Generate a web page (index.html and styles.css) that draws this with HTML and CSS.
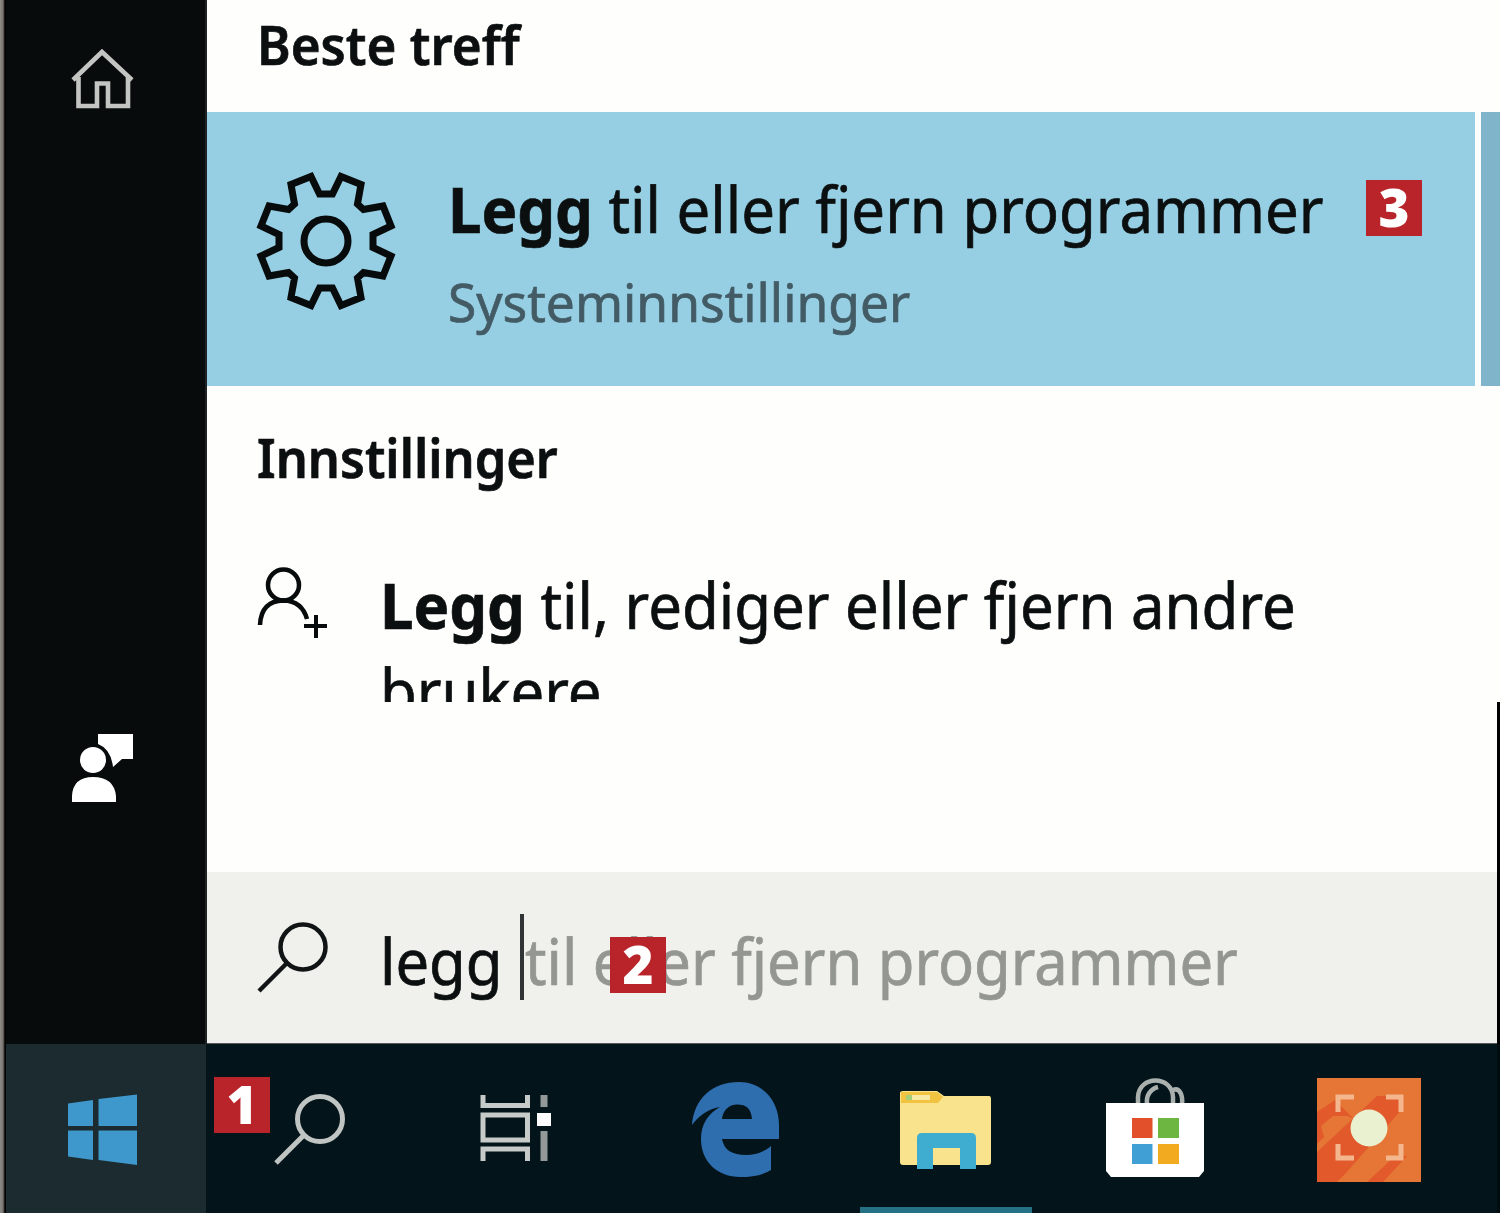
FILE: index.html
```html
<!DOCTYPE html>
<html lang="nb">
<head>
<meta charset="utf-8">
<title>Legg til eller fjern programmer</title>
<link rel="stylesheet" href="styles.css">
</head>
<body>
<div class="desktop">
  <div class="edge"></div>
  <div class="screen">
    <div class="upper">
      <nav class="rail">
        <svg class="home" width="70" height="68" viewBox="67 44 70 68" fill="none" stroke="#c3c5c3" stroke-width="4.6"><path d="M73 80 102 52 132 80M78.500 77V106H97V83.500H108V106H128V77"/></svg>
        <svg class="feedback" width="66" height="72" viewBox="69 732 66 72" fill="#fff"><circle cx="93" cy="760" r="13"/><path d="M72 802V796Q73 777 93 777Q114 777 116 796V802ZM98 734H133V759H122L113 767Q111 749 98 744Z"/></svg>
      </nav>
      <main class="panel">
        <h2 class="heading"><span class="fit head-a">Beste treff</span></h2>
        <section class="best">
          <div class="result">
            <svg class="gear" width="140" height="140" viewBox="-70 -70 140 140" fill="none" stroke="#080b0b" stroke-width="7"><path d="M-6.500-47H6.500L15-64.500 35-56.500 31.500-37 37.500-31.500 57-35 65-15 47-6.500V6.500L65 15 57 35 37.500 31.500 31.500 37 35 56.500 15 64.500 6.500 47H-6.500L-15 64.500-35 56.500-31.500 37-37.500 31.500-57 35-65 15-47 6.500V-6.500L-65-15-57-35-37.500-31.500-31.500-37-35-56.500-15-64.500Z"/><circle r="22"/></svg>
            <div class="result-text">
              <div class="line"><span class="fit title"><b>Legg</b> til eller fjern programmer</span></div>
              <div class="subline"><span class="fit sub">Systeminnstillinger</span></div>
            </div>
            <span class="badge badge-3">3</span>
          </div>
          <div class="expand"></div>
        </section>
        <section class="settings">
          <h2 class="heading second"><span class="fit head-b">Innstillinger</span></h2>
          <div class="setting">
            <svg class="person" width="74" height="76" viewBox="255 564 74 76" fill="none" stroke="#080b0b" stroke-width="4.500"><circle cx="283.500" cy="585" r="15.500"/><path d="M260 625Q261 601 283.500 600.500Q302 601 307 619"/><path d="M304 626H327M316 615V638" stroke-width="4"/></svg>
            <div class="setting-text"><span class="fit setting-title"><b>Legg</b> til, rediger eller fjern andre<br>brukere</span></div>
          </div>
        </section>
        <div class="lower">
          <div class="blank"></div>
          <div class="search">
            <svg class="glass" width="74" height="74" viewBox="255 919 74 74" fill="none" stroke="#101414" stroke-width="4.500"><circle cx="303" cy="947" r="22.500"/><path d="M287 963 259 991"/></svg>
            <span class="fit typed">legg</span>
            <span class="caret"></span>
            <span class="fit hint">til eller fjern programmer</span>
            <span class="badge badge-2">2</span>
          </div>
        </div>
      </main>
    </div>
    <footer class="taskbar">
      <div class="start">
        <svg width="72" height="72" viewBox="66 1094 72 72" fill="#3f98cc"><path d="M68 1103.500 93 1100V1126H68ZM98.500 1099 137 1094.500V1126H98.500ZM68 1130.500H93V1160L68 1156.500ZM98.500 1130.500H137V1165L98.500 1160Z"/></svg>
      </div>
      <div class="task task-search">
        <span class="badge badge-1">1</span>
        <svg width="74" height="74" viewBox="272 1092 74 74" fill="none" stroke="#c0c4c2" stroke-width="5"><circle cx="320" cy="1119" r="22.500"/><path d="M304 1135 276 1163"/></svg>
      </div>
      <div class="task task-view">
        <svg width="74" height="70" viewBox="479 1093 74 70" fill="none" stroke="#c6cac8" stroke-width="5"><path d="M483 1095V1105.500H527.500V1095M483 1115H527.500V1140H483ZM483 1161V1149H527.500V1161"/><path d="M544 1095V1107M544 1131V1161" stroke="#949997" stroke-width="7"/><rect x="537" y="1113" width="14" height="13" fill="#fff" stroke="none"/></svg>
      </div>
      <div class="task task-edge">
        <svg width="90" height="96" viewBox="691 1081 90 96" fill="#2f6eae"><path d="M692 1125C694 1099 712 1082 739 1082C762 1082 779 1100 779 1125V1139H722C724 1150 732 1155 746 1155C755 1155 764 1152 771 1146V1170C763 1175 752 1177 740 1177C718 1177 701 1162 701 1139C701 1124 708 1114 720 1107C707 1109 698 1117 692 1125ZM722 1119H752C751 1109 747 1104.500 737 1104.500C729 1104.500 723 1110 722 1119Z"/></svg>
      </div>
      <div class="task task-files">
        <svg width="94" height="80" viewBox="899 1090 94 80"><path d="M900 1093Q900 1091 903 1091H937L944 1096H989Q991 1096 991 1099V1162Q991 1165 988 1165H903Q900 1165 900 1162Z" fill="#f9e38c"/><path d="M901 1092H937L943 1097 938 1103H901Z" fill="#f2c341"/><path d="M906 1095H930V1100H906Z" fill="#f8eaa4"/><path d="M906 1095H912V1100H906Z" fill="#a5ce78"/><path d="M917 1169V1138Q917 1133 922 1133H971Q976 1133 976 1138V1169H960V1148H933V1169Z" fill="#3fadd0"/></svg>
      </div>
      <div class="task task-store">
        <svg width="102" height="104" viewBox="1104 1076 102 104"><g fill="none" stroke="#a9b0ae" stroke-width="4.500"><path d="M1138 1104V1097C1139 1075 1172 1075 1173 1097V1104M1147 1104C1146 1096 1150 1089 1158 1087M1173 1090C1180 1087 1183 1096 1182 1104"/></g><path d="M1106 1103H1204V1171L1199 1177H1111L1106 1171Z" fill="#fff"/><path d="M1132 1118H1152.500V1138H1132Z" fill="#e24f2b"/><path d="M1158 1118H1179V1138H1158Z" fill="#6db642"/><path d="M1132 1144H1152.500V1164H1132Z" fill="#40a0d6"/><path d="M1158 1144H1179V1164H1158Z" fill="#f2ab20"/></svg>
      </div>
      <div class="task task-capture">
        <svg width="104" height="104" viewBox="0 0 104 104"><path d="M0 0H104V104H0Z" fill="#e67635"/><path d="M0 34 18 22 36 40 28 38 0 66ZM0 74 60 18H86V30L28 96 20 104H0ZM50 104 78 78H90L66 104Z" fill="#e25a2c"/><path d="M4 48 16 38H32L8 62Z" fill="#e67635"/><path d="M54 66 86 36V76L50 82Z" fill="#e67635"/><g fill="none" stroke="#f4b68d" stroke-width="5"><path d="M21 34V19H37M69 19H84V34M21 66V80H37M69 80H84V66"/></g><circle cx="52" cy="50" r="18.500" fill="#e9f1d0"/></svg>
      </div>
    </footer>
  </div>
</div>
</body>
</html>
```
FILE: styles.css
```css
* { box-sizing: border-box; }
body { margin: 0; width: 1500px; height: 1213px; overflow: hidden; background: #fefefd; color: #0b0f0f; font-family: "Noto Sans", sans-serif; }
svg { display: block; flex: none; }
b { font-weight: 700; }
.desktop { display: flex; width: 1500px; height: 1213px; }
.edge { width: 6px; background: linear-gradient(90deg, #8f8b88 0, #77736f 3px, #000 5px); }
.screen { width: 1494px; display: flex; flex-direction: column; }
.upper { display: flex; height: 1044px; }
.rail { width: 201px; padding: 44px 0 240px 61px; background: #070b0c; border-right: 2px solid #202324; display: flex; flex-direction: column; justify-content: space-between; }
.feedback { margin-left: 2px; }
.panel { width: 1293px; display: flex; flex-direction: column; }

.fit { display: inline-block; white-space: nowrap; transform-origin: 0 50%; -webkit-text-stroke: .7px currentColor; }
.heading { margin: 0; height: 112px; padding: 4px 0 0 50px; font-size: 54px; line-height: 80px; font-weight: 600; }
.head-a { transform: scaleX(.947); }
.head-b { transform: scaleX(.934); }

.best { display: flex; gap: 6px; height: 274px; }
.result { position: relative; width: 1268px; background: #96cfe3; display: flex; }
.expand { width: 19px; background: #80b4ca; }
.gear { margin: 59px 0 0 49px; }
.result-text { padding: 54px 0 0 52px; }
.line { height: 86px; font-size: 63.500px; line-height: 86px; }
.title { transform: scaleX(.943); }
.subline { margin-top: 15px; height: 70px; font-size: 53px; line-height: 70px; color: #435b65; }
.sub { transform: scaleX(.972); }

.settings { height: 316px; overflow: hidden; }
.heading.second { height: 174px; padding-top: 31px; }
.setting { display: flex; }
.person { margin: 4px 0 0 48px; }
.setting-text { padding: 2px 0 0 51px; font-size: 63.500px; line-height: 86px; }
.setting-title { transform: scaleX(.943); }

.lower { height: 342px; border-right: 3px solid #000; }
.blank { height: 170px; }
.search { position: relative; display: flex; height: 172px; background: #f0f0ec; border-bottom: 1px solid #555b5b; font-size: 63.500px; line-height: 177px; }
.glass { margin: 47px 0 0 48px; }
.typed { width: 141px; margin-left: 51px; transform: scaleX(.94); }
.caret { width: 4px; height: 86px; margin: 42px 0 0 -1px; background: #303434; }
.hint { margin-left: 1px; color: #949791; transform: scaleX(.94); }

.badge { position: absolute; width: 56px; height: 56px; background: #b9242b; color: #fff; font: 800 53px/54px "Open Sans", sans-serif; text-align: center; }
.badge-1 { left: 8px; top: 33px; }
.badge-2 { left: 403px; top: 65px; }
.badge-3 { left: 1159px; top: 68px; }

.taskbar { display: flex; height: 169px; background: #03151a; border-right: 3px solid #010c0f; }
.start { width: 200px; padding: 50px 0 0 60px; background: #1b2b2f; }
.task { position: relative; flex: none; }
.task-search { width: 224px; padding: 48px 0 0 66px; }
.task-view { width: 215px; padding: 49px 0 0 49px; }
.task-edge { width: 215px; padding: 37px 0 0 46px; }
.task-files { width: 172px; padding: 46px 0 0 39px; border-bottom: 6px solid #267086; }
.task-store { width: 242px; padding: 32px 0 0 72px; }
.task-capture { width: 180px; padding: 34px 0 0 43px; }
```
